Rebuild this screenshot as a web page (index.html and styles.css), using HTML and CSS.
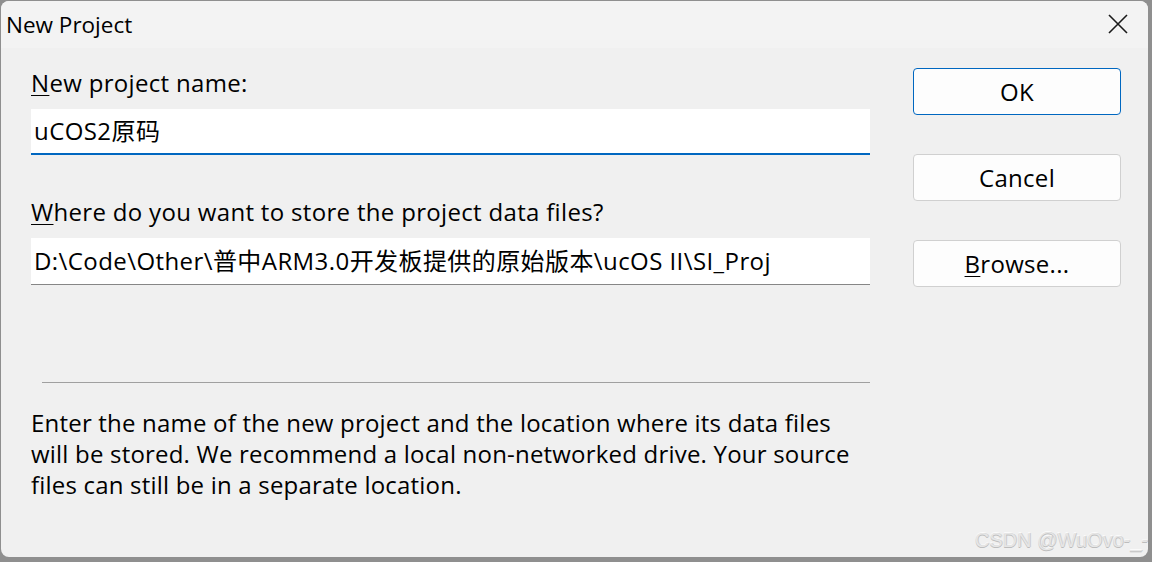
FILE: index.html
```html
<!DOCTYPE html>
<html>
<head>
<meta charset="utf-8">
<link rel="stylesheet" href="styles.css">
</head>
<body>
<div class="window">
  <div class="titlebar">
    <span class="title">New Project</span>
    <svg class="close" width="20" height="20" viewBox="0 0 20 20"><path d="M1 1 L19 19 M19 1 L1 19" stroke="#1a1a1a" stroke-width="1.6" fill="none"/></svg>
  </div>
  <div class="body">
    <div class="main">
      <div class="label"><u>N</u>ew project name:</div>
      <div class="input focused">uCOS2原码</div>
      <div class="label label2"><u>W</u>here do you want to store the project data files?</div>
      <div class="input">D:\Code\Other\普中ARM3.0开发板提供的原始版本\ucOS II\SI_Proj</div>
      <div class="sep"></div>
      <p class="desc">Enter the name of the new project and the location where its data files will be stored. We recommend a local non-networked drive. Your source files can still be in a separate location.</p>
    </div>
    <div class="buttons">
      <div class="btn default">OK</div>
      <div class="btn">Cancel</div>
      <div class="btn"><u>B</u>rowse...</div>
    </div>
  </div>
  <div class="watermark">CSDN @WuOvo-_-</div>
</div>
</body>
</html>
```
FILE: styles.css
```css
html, body {
  margin: 0;
  padding: 0;
  width: 1152px;
  height: 562px;
  background: #8f8f8f;
  overflow: hidden;
}
.window {
  position: relative;
  margin: 1px 0 0 1px;
  width: 1147px;
  height: 556px;
  background: #f0f0f0;
  border-radius: 8px;
  overflow: hidden;
  font-family: "Open Sans", "Noto Sans CJK SC", sans-serif;
  color: #000;
}
.titlebar {
  height: 47px;
  background: #f3f3f3;
  display: flex;
  align-items: center;
  justify-content: space-between;
  padding: 0 20px 0 5px;
}
.title {
  font-size: 22.5px;
  letter-spacing: 0px;
  margin-top: -1px;
}
.close {
  display: block;
  margin-top: -1px;
}
.body {
  display: flex;
  padding: 0 0 0 30px;
}
.main {
  width: 839px;
}
.label {
  font-size: 24px;
  letter-spacing: 0.32px;
  line-height: 30px;
  margin-top: 20px;
  height: 30px;
}
.label2 {
  margin-top: 42px;
}
.label u, .btn u {
  text-decoration-thickness: 1px;
  text-underline-offset: 3px;
}
.input {
  margin-top: 11px;
  height: 47px;
  box-sizing: border-box;
  background: #fff;
  border-bottom: 1px solid #868686;
  font-size: 24px;
  letter-spacing: 0.42px;
  line-height: 45px;
  padding-left: 3px;
  white-space: nowrap;
  overflow: hidden;
}
.input.focused {
  height: 46px;
  line-height: 44px;
  border-bottom: 2px solid #0067c0;
  margin-top: 11px;
}
.sep {
  margin: 97px 0 0 11px;
  height: 1px;
  background: #a0a0a0;
}
.desc {
  margin: 24px 0 0 0;
  font-size: 24px;
  letter-spacing: 0.2px;
  line-height: 31px;
  width: 840px;
}
.buttons {
  margin-left: 43px;
  padding-top: 20px;
  display: flex;
  flex-direction: column;
  gap: 39px;
}
.btn {
  width: 208px;
  height: 47px;
  box-sizing: border-box;
  background: #fdfdfd;
  border: 1px solid #d0d0d0;
  border-radius: 4px;
  font-size: 24px;
  letter-spacing: 0.3px;
  display: flex;
  align-items: center;
  justify-content: center;
}
.btn.default {
  border-color: #0067c0;
}
.watermark {
  position: absolute;
  right: 0px;
  bottom: 5px;
  font-family: "Liberation Sans", Arial, sans-serif;
  font-size: 20px;
  color: #e6e6e6;
  text-shadow: 0 1px 0 #bdbdbd, 1px 0 0 #cfcfcf, 0 -1px 0 #fafafa;
}
```
